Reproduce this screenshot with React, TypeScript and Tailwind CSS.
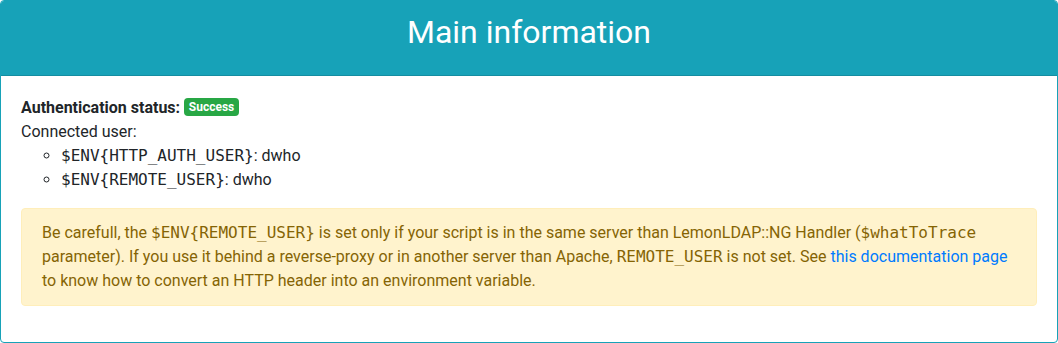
export default function App() {
  const mono = "font-['DejaVu_Sans_Mono',monospace] text-base"
  return (
    <div className="font-['Roboto',sans-serif] text-base leading-6 text-[#212529]">
      <div className="overflow-hidden rounded border border-[#17a2b8] bg-white">
        {/* Header */}
        <div className="h-[75px] border-b border-black/[0.125] bg-[#17a2b8] pt-3 text-center">
          <h1 className="text-[32px] font-normal leading-[38px] text-white">Main information</h1>
        </div>

        {/* Body */}
        <div className="p-5">
          <div>
            <b className="font-bold">Authentication status:</b>{' '}
            <span className="inline-block rounded bg-[#28a745] px-[4.8px] py-[3px] align-[2px] text-xs font-bold leading-none text-white">
              Success
            </span>
          </div>
          <div>Connected user:</div>
          <ul className="mb-4 list-[circle] pl-10">
            <li>
              <span className={mono}>$ENV{'{'}HTTP_AUTH_USER{'}'}</span>: dwho
            </li>
            <li>
              <span className={mono}>$ENV{'{'}REMOTE_USER{'}'}</span>: dwho
            </li>
          </ul>

          <div className="mb-4 rounded border border-[#ffeeba] bg-[#fff3cd] px-5 py-3 text-[#856404]">
            Be carefull, the <span className={mono}>$ENV{'{'}REMOTE_USER{'}'}</span> is set only if your script is in
            the same server than LemonLDAP::NG Handler (<span className={mono}>$whatToTrace</span> parameter). If you
            use it behind a reverse-proxy or in another server than Apache, <span className={mono}>REMOTE_USER</span> is
            not set. See{' '}
            <a href="#" className="text-[#007bff]">
              this documentation page
            </a>{' '}
            to know how to convert an HTTP header into an environment variable.
          </div>
        </div>
      </div>
    </div>
  )
}
